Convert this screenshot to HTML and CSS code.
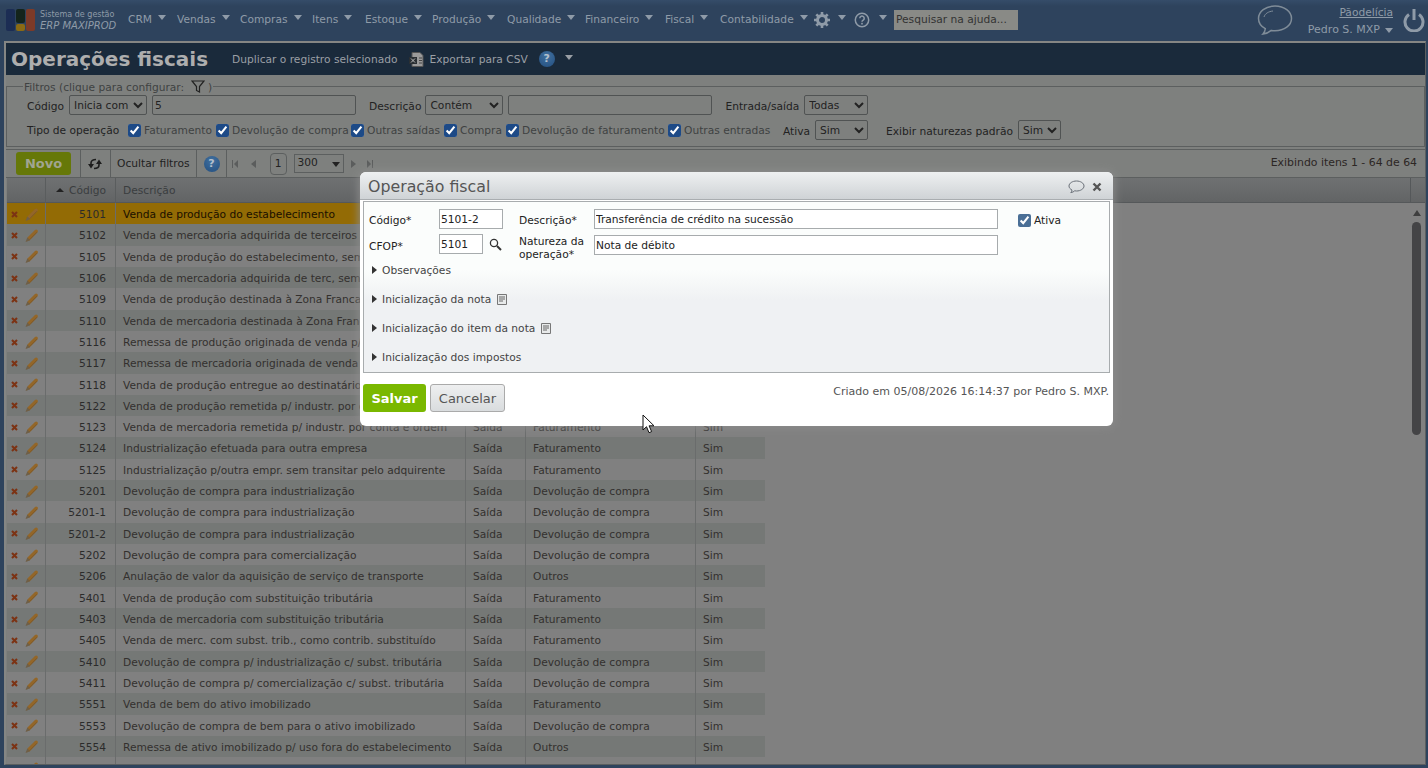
FILE: index.html
```html
<!DOCTYPE html>
<html lang="pt-BR">
<head>
    <meta charset="UTF-8">
    <title>Operações fiscais</title>
    <link rel="stylesheet" href="styles.css">
</head>
<body>
    <svg class="sprite" width="0" height="0">
        <symbol id="ic-pencil" viewBox="0 0 16 16">
            <path d="M5 11.500 13 3.500" stroke="#936628" stroke-width="3.600" stroke-linecap="round" fill="none"/>
            <path d="M6 12.500 13.800 4.500" stroke="#75542a" stroke-width=".8" fill="none"/>
            <path d="M3.600 10l2.900 3L1.500 15z" fill="#6f5f47"/>
        </symbol>
        <symbol id="ic-del" viewBox="0 0 7 7">
            <path d="M1 1l5 5M6 1 1 6" stroke="#7c3314" stroke-width="2.100" fill="none"/>
        </symbol>
        <symbol id="ic-note" viewBox="0 0 10 11">
            <path d="M.5.5h9v10h-9z" fill="#e8eaea" stroke="#777"/>
            <path d="M2 3h6M2 5h6M2 7h4" stroke="#666"/>
        </symbol>
    </svg>

    <header class="topbar">
        <div class="brand">
            <svg class="logo" width="30" height="24" viewBox="0 0 30 24">
                <rect x="0" y="1" width="9" height="22" rx="2" fill="#1c2d54"/>
                <rect x="10" y="1" width="9" height="14" rx="2" fill="#14241c"/>
                <rect x="10" y="16" width="9" height="7" rx="2" fill="#8a6a14"/>
                <rect x="20" y="1" width="9" height="22" rx="2" fill="#7c3a28"/>
            </svg>
            <div class="brand-text">
                <span>Sistema de gestão</span>
                <em>ERP MAXIPROD</em>
            </div>
        </div>
        <nav class="menu">
            <a style="width:49px">CRM<i class="caret"></i></a>
            <a style="width:63px">Vendas<i class="caret"></i></a>
            <a style="width:72px">Compras<i class="caret"></i></a>
            <a style="width:53px">Itens<i class="caret"></i></a>
            <a style="width:67px">Estoque<i class="caret"></i></a>
            <a style="width:75px">Produção<i class="caret"></i></a>
            <a style="width:78px">Qualidade<i class="caret"></i></a>
            <a style="width:80px">Financeiro<i class="caret"></i></a>
            <a style="width:55px">Fiscal<i class="caret"></i></a>
            <a style="width:93px">Contabilidade<i class="caret"></i></a>
        </nav>
        <svg class="gear" width="18" height="18" viewBox="0 0 18 18">
            <circle cx="9" cy="9" r="4.500" fill="none" stroke="#8f9ba8" stroke-width="3"/>
            <path d="M9 1v3M9 14v3M1 9h3M14 9h3M3.300 3.300l2.200 2.200M12.500 12.500l2.200 2.200M14.700 3.300l-2.200 2.200M5.500 12.500l-2.200 2.200" stroke="#8f9ba8" stroke-width="2.600"/>
        </svg>
        <i class="caret caret-gear"></i>
        <svg class="help-top" width="16" height="16" viewBox="0 0 16 16">
            <circle cx="8" cy="8" r="6.700" fill="none" stroke="#8f9ba8" stroke-width="1.500"/>
            <path d="M5.800 6.200a2.200 2.200 0 1 1 3.400 1.900c-.8.500-1.200.9-1.200 1.700" fill="none" stroke="#8f9ba8" stroke-width="1.500"/>
            <rect x="7.200" y="10.800" width="1.600" height="1.700" fill="#8f9ba8"/>
        </svg>
        <i class="caret caret-help"></i>
        <input class="search-help" type="text" value="Pesquisar na ajuda...">
        <svg class="bubble" width="36" height="32" viewBox="0 0 36 32">
            <path d="M18 2C8.600 2 1.500 7.600 1.500 14.500c0 4.300 2.700 8 6.800 10.200-.2 2.100-1 3.900-2.300 5.300 3.400-.4 6.200-1.800 8.300-3.600 1.200.2 2.400.3 3.700.3 9.400 0 16.500-5.400 16.500-12.200S27.400 2 18 2z" fill="none" stroke="#7f8c98" stroke-width="1.500"/>
            <path d="M7 13c1-3.500 4.500-5.500 9-6" fill="none" stroke="#7f8c98" stroke-width="1"/>
        </svg>
        <div class="user">
            <a class="company">Pãodelícia</a>
            <span class="user-name">Pedro S. MXP<i class="caret caret-user"></i></span>
        </div>
        <svg class="power" width="22" height="24" viewBox="0 0 22 24">
            <path d="M6 6.500a9 9 0 1 0 10 0" fill="none" stroke="#8f9ba8" stroke-width="3"/>
            <path d="M11 1v11" stroke="#8f9ba8" stroke-width="3"/>
        </svg>
    </header>

    <main class="panel">
        <div class="title-band">
            <h1>Operações fiscais</h1>
            <a class="act-dup">Duplicar o registro selecionado</a>
            <svg class="xls" width="15" height="15" viewBox="0 0 15 15">
                <path d="M3 .5h8l3 3v11H3z" fill="#9a9a9a" stroke="#555"/>
                <rect x="0" y="5" width="8" height="7" fill="#2a2f33"/>
                <path d="M2 6.500l4 4M6 6.500l-4 4" stroke="#bbb"/>
                <path d="M10 6h3M10 8.500h3M10 11h3" stroke="#444"/>
            </svg>
            <a class="act-csv">Exportar para CSV</a>
            <span class="help-dot help-title">?</span>
            <i class="caret caret-title"></i>
        </div>

        <fieldset class="filters">
            <legend>Filtros (clique para configurar:
                <svg class="funnel" width="14" height="13" viewBox="0 0 14 13"><path d="M1 1h12L8.500 6.500V12l-3-1.500v-4z" fill="none" stroke="#222" stroke-width="1.200"/></svg>
            )</legend>
            <div class="filter-row row-one">
                <label class="lbl-code">Código</label>
                <select class="sel-code"><option>Inicia com</option></select>
                <input class="inp-code" type="text" value="5">
                <label class="lbl-desc">Descrição</label>
                <select class="sel-desc"><option>Contém</option></select>
                <input class="inp-desc" type="text">
                <label class="lbl-es">Entrada/saída</label>
                <select class="sel-es"><option>Todas</option></select>
            </div>
            <div class="filter-row row-two">
                <label class="lbl-tipo">Tipo de operação</label>
                <label class="chk c-fat"><input type="checkbox" checked>Faturamento</label>
                <label class="chk c-dev"><input type="checkbox" checked>Devolução de compra</label>
                <label class="chk c-out"><input type="checkbox" checked>Outras saídas</label>
                <label class="chk c-com"><input type="checkbox" checked>Compra</label>
                <label class="chk c-dfa"><input type="checkbox" checked>Devolução de faturamento</label>
                <label class="chk c-oen"><input type="checkbox" checked>Outras entradas</label>
                <label class="lbl-ativa">Ativa</label>
                <select class="sel-ativa"><option>Sim</option></select>
                <label class="lbl-exibir">Exibir naturezas padrão</label>
                <select class="sel-exibir"><option>Sim</option></select>
            </div>
        </fieldset>

        <div class="toolbar">
            <button class="btn-novo">Novo</button>
            <span class="tool-sep"></span>
            <svg class="refresh" width="14" height="12" viewBox="0 0 14 12">
                <path d="M3 6.500V5C3 3 5 1.500 8 1.500M11 5.500V7c0 2-2 3.500-5 3.500" fill="none" stroke="#1d1d1d" stroke-width="1.600"/>
                <path d="M0 6h6l-3 4.500zM8 6h6l-3-4.500z" fill="#1d1d1d"/>
            </svg>
            <span class="tool-sep"></span>
            <span class="tool-text">Ocultar filtros</span>
            <span class="tool-sep"></span>
            <span class="help-dot help-tool">?</span>
            <span class="tool-sep"></span>
            <span class="pager">
                <svg width="6" height="8" viewBox="0 0 6 8"><path d="M0 0h1v8H0zM6 0v8L2 4z" fill="#5b5d5d"/></svg>
                <svg class="pg-prev" width="5" height="8" viewBox="0 0 5 8"><path d="M5 0v8L0 4z" fill="#5b5d5d"/></svg>
                <span class="page-box">1</span>
                <span class="page-size">300<i class="caret-dark"></i></span>
                <svg width="5" height="8" viewBox="0 0 5 8"><path d="M0 0v8l5-4z" fill="#5b5d5d"/></svg>
                <svg class="pg-last" width="6" height="8" viewBox="0 0 6 8"><path d="M0 0v8l4-4zM5 0h1v8H5z" fill="#5b5d5d"/></svg>
            </span>
            <span class="tool-count">Exibindo itens 1 - 64 de 64</span>
        </div>

        <div class="grid-head">
            <div class="cols">
                <span></span>
                <span class="h-code"><i class="sort-up"></i>Código</span>
                <span>Descrição</span>
                <span></span><span></span><span></span>
            </div>
            <div class="head-scroll"></div>
        </div>

        <div class="grid-wrap">
            <div class="grid-rows">
                <div class="cols row selected"><span class="acts"><svg class="del"><use href="#ic-del"/></svg><svg class="pen"><use href="#ic-pencil"/></svg></span><span class="num">5101</span><span>Venda de produção do estabelecimento</span><span></span><span></span><span></span></div>
                <div class="cols row"><span class="acts"><svg class="del"><use href="#ic-del"/></svg><svg class="pen"><use href="#ic-pencil"/></svg></span><span class="num">5102</span><span>Venda de mercadoria adquirida de terceiros</span><span></span><span></span><span></span></div>
                <div class="cols row"><span class="acts"><svg class="del"><use href="#ic-del"/></svg><svg class="pen"><use href="#ic-pencil"/></svg></span><span class="num">5105</span><span>Venda de produção do estabelecimento, sem transitar</span><span></span><span></span><span></span></div>
                <div class="cols row"><span class="acts"><svg class="del"><use href="#ic-del"/></svg><svg class="pen"><use href="#ic-pencil"/></svg></span><span class="num">5106</span><span>Venda de mercadoria adquirida de terc, sem transitar</span><span></span><span></span><span></span></div>
                <div class="cols row"><span class="acts"><svg class="del"><use href="#ic-del"/></svg><svg class="pen"><use href="#ic-pencil"/></svg></span><span class="num">5109</span><span>Venda de produção destinada à Zona Franca de Manaus</span><span></span><span></span><span></span></div>
                <div class="cols row"><span class="acts"><svg class="del"><use href="#ic-del"/></svg><svg class="pen"><use href="#ic-pencil"/></svg></span><span class="num">5110</span><span>Venda de mercadoria destinada à Zona Franca de Manaus</span><span></span><span></span><span></span></div>
                <div class="cols row"><span class="acts"><svg class="del"><use href="#ic-del"/></svg><svg class="pen"><use href="#ic-pencil"/></svg></span><span class="num">5116</span><span>Remessa de produção originada de venda p/ entrega</span><span></span><span></span><span></span></div>
                <div class="cols row"><span class="acts"><svg class="del"><use href="#ic-del"/></svg><svg class="pen"><use href="#ic-pencil"/></svg></span><span class="num">5117</span><span>Remessa de mercadoria originada de venda p/ entrega</span><span></span><span></span><span></span></div>
                <div class="cols row"><span class="acts"><svg class="del"><use href="#ic-del"/></svg><svg class="pen"><use href="#ic-pencil"/></svg></span><span class="num">5118</span><span>Venda de produção entregue ao destinatário por conta</span><span></span><span></span><span></span></div>
                <div class="cols row"><span class="acts"><svg class="del"><use href="#ic-del"/></svg><svg class="pen"><use href="#ic-pencil"/></svg></span><span class="num">5122</span><span>Venda de produção remetida p/ industr. por conta e ordem</span><span></span><span></span><span></span></div>
                <div class="cols row"><span class="acts"><svg class="del"><use href="#ic-del"/></svg><svg class="pen"><use href="#ic-pencil"/></svg></span><span class="num">5123</span><span>Venda de mercadoria remetida p/ industr. por conta e ordem</span><span>Saída</span><span>Faturamento</span><span>Sim</span></div>
                <div class="cols row"><span class="acts"><svg class="del"><use href="#ic-del"/></svg><svg class="pen"><use href="#ic-pencil"/></svg></span><span class="num">5124</span><span>Industrialização efetuada para outra empresa</span><span>Saída</span><span>Faturamento</span><span>Sim</span></div>
                <div class="cols row"><span class="acts"><svg class="del"><use href="#ic-del"/></svg><svg class="pen"><use href="#ic-pencil"/></svg></span><span class="num">5125</span><span>Industrialização p/outra empr. sem transitar pelo adquirente</span><span>Saída</span><span>Faturamento</span><span>Sim</span></div>
                <div class="cols row"><span class="acts"><svg class="del"><use href="#ic-del"/></svg><svg class="pen"><use href="#ic-pencil"/></svg></span><span class="num">5201</span><span>Devolução de compra para industrialização</span><span>Saída</span><span>Devolução de compra</span><span>Sim</span></div>
                <div class="cols row"><span class="acts"><svg class="del"><use href="#ic-del"/></svg><svg class="pen"><use href="#ic-pencil"/></svg></span><span class="num">5201-1</span><span>Devolução de compra para industrialização</span><span>Saída</span><span>Devolução de compra</span><span>Sim</span></div>
                <div class="cols row"><span class="acts"><svg class="del"><use href="#ic-del"/></svg><svg class="pen"><use href="#ic-pencil"/></svg></span><span class="num">5201-2</span><span>Devolução de compra para industrialização</span><span>Saída</span><span>Devolução de compra</span><span>Sim</span></div>
                <div class="cols row"><span class="acts"><svg class="del"><use href="#ic-del"/></svg><svg class="pen"><use href="#ic-pencil"/></svg></span><span class="num">5202</span><span>Devolução de compra para comercialização</span><span>Saída</span><span>Devolução de compra</span><span>Sim</span></div>
                <div class="cols row"><span class="acts"><svg class="del"><use href="#ic-del"/></svg><svg class="pen"><use href="#ic-pencil"/></svg></span><span class="num">5206</span><span>Anulação de valor da aquisição de serviço de transporte</span><span>Saída</span><span>Outros</span><span>Sim</span></div>
                <div class="cols row"><span class="acts"><svg class="del"><use href="#ic-del"/></svg><svg class="pen"><use href="#ic-pencil"/></svg></span><span class="num">5401</span><span>Venda de produção com substituição tributária</span><span>Saída</span><span>Faturamento</span><span>Sim</span></div>
                <div class="cols row"><span class="acts"><svg class="del"><use href="#ic-del"/></svg><svg class="pen"><use href="#ic-pencil"/></svg></span><span class="num">5403</span><span>Venda de mercadoria com substituição tributária</span><span>Saída</span><span>Faturamento</span><span>Sim</span></div>
                <div class="cols row"><span class="acts"><svg class="del"><use href="#ic-del"/></svg><svg class="pen"><use href="#ic-pencil"/></svg></span><span class="num">5405</span><span>Venda de merc. com subst. trib., como contrib. substituído</span><span>Saída</span><span>Faturamento</span><span>Sim</span></div>
                <div class="cols row"><span class="acts"><svg class="del"><use href="#ic-del"/></svg><svg class="pen"><use href="#ic-pencil"/></svg></span><span class="num">5410</span><span>Devolução de compra p/ industrialização c/ subst. tributária</span><span>Saída</span><span>Devolução de compra</span><span>Sim</span></div>
                <div class="cols row"><span class="acts"><svg class="del"><use href="#ic-del"/></svg><svg class="pen"><use href="#ic-pencil"/></svg></span><span class="num">5411</span><span>Devolução de compra p/ comercialização c/ subst. tributária</span><span>Saída</span><span>Devolução de compra</span><span>Sim</span></div>
                <div class="cols row"><span class="acts"><svg class="del"><use href="#ic-del"/></svg><svg class="pen"><use href="#ic-pencil"/></svg></span><span class="num">5551</span><span>Venda de bem do ativo imobilizado</span><span>Saída</span><span>Faturamento</span><span>Sim</span></div>
                <div class="cols row"><span class="acts"><svg class="del"><use href="#ic-del"/></svg><svg class="pen"><use href="#ic-pencil"/></svg></span><span class="num">5553</span><span>Devolução de compra de bem para o ativo imobilizado</span><span>Saída</span><span>Devolução de compra</span><span>Sim</span></div>
                <div class="cols row"><span class="acts"><svg class="del"><use href="#ic-del"/></svg><svg class="pen"><use href="#ic-pencil"/></svg></span><span class="num">5554</span><span>Remessa de ativo imobilizado p/ uso fora do estabelecimento</span><span>Saída</span><span>Outros</span><span>Sim</span></div>
                <div class="cols row"><span class="acts"><svg class="del"><use href="#ic-del"/></svg><svg class="pen"><use href="#ic-pencil"/></svg></span><span></span><span></span><span></span><span></span><span></span></div>
            </div>
            <div class="scroll">
                <i class="scroll-up"></i>
                <i class="scroll-thumb"></i>
            </div>
        </div>
    </main>

    <section class="modal">
        <div class="modal-head">
            <h2>Operação fiscal</h2>
            <svg class="modal-bubble" width="17" height="14" viewBox="0 0 17 14">
                <path d="M8.500 1C4.400 1 1 3.200 1 6c0 1.700 1.200 3.100 3 4-.1 1-.5 1.900-1.200 2.600C4.500 12.400 5.800 11.700 6.700 10.800c.6.100 1.200.2 1.800.2 4.100 0 7.500-2.200 7.500-5S12.600 1 8.500 1z" fill="none" stroke="#6a7078"/>
            </svg>
            <svg class="modal-close" width="10" height="10" viewBox="0 0 10 10">
                <path d="M1.500 1.500l7 7M8.500 1.500l-7 7" stroke="#555" stroke-width="2.400"/>
            </svg>
        </div>
        <div class="modal-body">
            <div class="form-grid">
                <label class="f-l1">Código*</label>
                <input class="f-code" type="text" value="5101-2">
                <label class="f-l2">Descrição*</label>
                <input class="f-wide" type="text" value="Transferência de crédito na sucessão">
                <label class="f-ativa"><input type="checkbox" checked>Ativa</label>

                <label class="f-l1">CFOP*</label>
                <div class="cfop">
                    <input class="f-cfop" type="text" value="5101">
                    <svg width="13" height="13" viewBox="0 0 13 13">
                        <circle cx="5" cy="5" r="3.600" fill="none" stroke="#333" stroke-width="1.300"/>
                        <path d="M8 8l4 4" stroke="#333" stroke-width="2"/>
                    </svg>
                </div>
                <label class="two-lines">Natureza da operação*</label>
                <input class="f-wide" type="text" value="Nota de débito">
            </div>
            <div class="section first"><i class="tri"></i>Observações</div>
            <div class="section"><i class="tri"></i>Inicialização da nota<svg class="note"><use href="#ic-note"/></svg></div>
            <div class="section"><i class="tri"></i>Inicialização do item da nota<svg class="note"><use href="#ic-note"/></svg></div>
            <div class="section"><i class="tri"></i>Inicialização dos impostos</div>
        </div>
        <div class="modal-foot">
            <button class="btn-save">Salvar</button>
            <button class="btn-cancel">Cancelar</button>
            <span class="created">Criado em 05/08/2026 16:14:37 por Pedro S. MXP.</span>
        </div>
    </section>

    <svg class="cursor" width="14" height="21" viewBox="0 0 14 21">
        <path d="M1 1v15l3.500-3.300 2.500 6 2.600-1.100-2.500-5.800H12z" fill="#fff" stroke="#111" stroke-width="1"/>
    </svg>
</body>
</html>
```

FILE: styles.css
```css
* {
    box-sizing: border-box;
}
html, body {
    margin: 0;
    height: 768px;
    overflow: hidden;
}
body {
    background: #2e435d;
    font-family: "DejaVu Sans", sans-serif;
    font-size: 10.67px;
    color: #222;
    display: flex;
    flex-direction: column;
}
.sprite {
    position: absolute;
}
a {
    color: inherit;
}

/* top bar */
.topbar {
    height: 41px;
    flex: none;
    display: flex;
    align-items: center;
    padding-bottom: 2px;
    color: #8f9ba8;
    background: linear-gradient(#354c69, #2e435d 6px);
}
.brand {
    display: flex;
    align-items: center;
    width: 128px;
    padding-left: 6px;
}
.logo {
    flex: none;
}
.brand-text {
    display: flex;
    flex-direction: column;
    font-size: 8px;
    line-height: 11px;
    margin-left: 4px;
}
.brand-text em {
    font-size: 10px;
    font-style: italic;
    white-space: nowrap;
}
.menu {
    display: flex;
}
.menu a {
    display: flex;
    align-items: center;
    gap: 6px;
    white-space: nowrap;
}
.caret {
    display: inline-block;
    width: 0;
    height: 0;
    border: 4px solid transparent;
    border-top: 5px solid #8f9ba8;
    border-bottom: 0;
    margin-top: -4px;
}
.caret-gear {
    margin-left: 7px;
}
.help-top {
    margin-left: 8px;
}
.caret-help {
    margin-left: 9px;
}
.search-help {
    width: 124px;
    height: 20px;
    margin-left: 7px;
    padding: 0 2px;
    border: 0;
    background: #898a86;
    font: 10.67px "DejaVu Sans", sans-serif;
    color: #333;
}
.bubble {
    margin-left: 239px;
}
.user {
    width: 100px;
    margin: 2px 0 0;
    text-align: right;
    line-height: 17px;
}
.company {
    text-decoration: underline;
}
.user-name {
    display: block;
    font-size: 11px;
}
.caret-user {
    margin-left: 5px;
    margin-top: 0;
}
.power {
    margin-left: 10px;
}

/* main panel */
.panel {
    flex: 1;
    margin: 0 2px 3px 4px;
    border-top: 2px solid #858684;
    border-left: 2px solid #858684;
    border-right: 1px solid #5c5f5f;
    border-bottom: 1px solid #5c5f5f;
    background: #7e807e;
    display: flex;
    flex-direction: column;
    min-height: 0;
}
.title-band {
    height: 32px;
    flex: none;
    display: flex;
    align-items: center;
    background: #1a2a3b;
    color: #9a9fa5;
    padding-left: 5px;
}
.title-band h1 {
    margin: 0;
    width: 221px;
    font-size: 20px;
    font-weight: bold;
    color: #aeaeae;
    white-space: nowrap;
}
.xls {
    margin-left: 12px;
}
.act-csv {
    margin-left: 5px;
}
.help-dot {
    display: inline-block;
    width: 16px;
    height: 16px;
    border-radius: 50%;
    background: radial-gradient(circle at 50% 30%, #41709f, #234f80);
    color: #b5c0cc;
    font-weight: bold;
    font-size: 11px;
    line-height: 16px;
    text-align: center;
}
.help-title {
    margin-left: 11px;
}
.caret-title {
    margin-left: 10px;
    border-top-color: #9a9fa5;
}

/* filters */
.filters {
    margin: 5px 0 0;
    padding: 0;
    height: 67px;
    border: 1px solid #5c5f5f;
    min-width: 0;
}
.filters legend {
    margin-left: 16px;
    padding: 0 1px;
    color: #3f4242;
    line-height: 12px;
    height: 12px;
}
.funnel {
    vertical-align: -2px;
    margin-left: 3px;
}
.filter-row {
    display: flex;
    align-items: center;
    height: 20px;
    white-space: nowrap;
}
.filter-row > label:not(.chk):not(.lbl-tipo) {
    margin-top: 2px;
}
.row-one {
    margin-top: 3px;
}
.row-two {
    margin-top: 5px;
}
.filters select, .filters input[type=text] {
    height: 20px;
    border: 1px solid #505353;
    border-radius: 2px;
    background: transparent;
    font: 10.67px "DejaVu Sans", sans-serif;
    color: #222;
    padding: 0 2px;
}
.filters select {
    padding: 0;
}
.lbl-code, .lbl-tipo {
    margin-left: 20px;
}
.sel-code {
    width: 78px;
    margin-left: 5px;
}
.inp-code {
    width: 204px;
    margin-left: 5px;
}
.lbl-desc {
    margin-left: 13px;
}
.sel-desc {
    width: 78px;
    margin-left: 4px;
}
.inp-desc {
    width: 204px;
    margin-left: 5px;
}
.lbl-es {
    margin-left: 13px;
}
.sel-es {
    width: 64px;
    margin-left: 5px;
}
.lbl-tipo {
    width: 101px;
}
.chk {
    display: flex;
    align-items: center;
    color: #3f4242;
}
.chk input, .f-ativa input {
    width: 13px;
    height: 13px;
    margin: 0 3px 0 0;
    accent-color: #1d4a87;
}
.c-fat {
    width: 88px;
}
.c-dev {
    width: 135px;
}
.c-out {
    width: 93px;
}
.c-com {
    width: 62px;
}
.c-dfa {
    width: 162px;
}
.c-oen {
    width: 115px;
}
.sel-ativa {
    width: 53px;
    margin-left: 5px;
}
.lbl-exibir {
    margin-left: 18px;
}
.sel-exibir {
    width: 43px;
    margin-left: 5px;
}

/* toolbar */
.toolbar {
    height: 29px;
    flex: none;
    display: flex;
    align-items: center;
    margin-top: 2px;
    padding-left: 10px;
    border-top: 1px solid #5c5f5f;
    border-bottom: 1px solid #5c5f5f;
}
.btn-novo {
    width: 55px;
    height: 23px;
    margin-right: 1px;
    border: 0;
    border-radius: 3px;
    background: #667808;
    color: #a0a590;
    font: bold 13px "DejaVu Sans", sans-serif;
    padding: 0;
}
.tool-sep {
    width: 1px;
    height: 27px;
    background: #5c5f5f;
    margin: 0 6px 0 8px;
}
.refresh {
    margin-left: 1px;
}
.tool-text {
    color: #1f1f1f;
    margin-right: -2px;
}
.help-tool {
    margin: 0 -2px 0 1px;
}
.pager {
    display: flex;
    align-items: center;
    margin-left: -1px;
}
.pg-prev {
    margin: 0 14px 0 13px;
}
.page-box {
    width: 17px;
    height: 22px;
    border: 1px solid #5c5f5f;
    border-radius: 4px;
    text-align: center;
    line-height: 20px;
    margin-right: 7px;
}
.page-size {
    position: relative;
    width: 50px;
    height: 19px;
    border: 1px solid #5c5f5f;
    padding-left: 3px;
    line-height: 15px;
    margin-right: 7px;
}
.caret-dark {
    position: absolute;
    right: 3px;
    top: 7px;
    border: 4px solid transparent;
    border-top: 5px solid #222;
    border-bottom: 0;
}
.pager .pg-last {
    margin-left: 11px;
}
.tool-count {
    margin: 0 8px 2px auto;
    font-size: 10.9px;
    color: #2c2624;
}

/* grid */
.cols {
    display: grid;
    grid-template-columns: 38px 70px 350px 60px 170px 70px;
    width: 758px;
}
.grid-head {
    height: 25px;
    flex: none;
    display: flex;
    justify-content: space-between;
    margin-left: 1px;
    background: linear-gradient(#6f7172, #626465);
    border-bottom: 1px solid #55585a;
    color: #3a3d3f;
}
.grid-head span {
    line-height: 25px;
    padding-left: 7px;
    border-left: 1px solid #5a5d5e;
}
.grid-head span:first-child {
    border-left: 0;
}
.grid-head .h-code {
    padding-left: 10px;
}
.head-scroll {
    width: 15px;
    border-left: 1px solid #55585a;
}
.sort-up {
    display: inline-block;
    border: 4px solid transparent;
    border-bottom: 4px solid #222;
    border-top: 0;
    margin-right: 5px;
    vertical-align: 2px;
}
.grid-wrap {
    flex: 1;
    min-height: 0;
    margin-left: 1px;
    overflow: hidden;
    background: #808080;
    display: flex;
    justify-content: space-between;
}
.grid-rows {
    width: 758px;
}
.row {
    height: 21.32px;
    color: #33302e;
}
.row > span {
    line-height: 24px;
    padding-left: 7px;
    white-space: nowrap;
    overflow: hidden;
    border-left: 1px solid #6a6c6c;
}
.row:nth-child(even) {
    background: #757876;
}
.row.selected {
    background: #936b05;
    color: #1a1000;
}
.row > .acts {
    border-left: 0;
    padding: 1px 0 0 4px;
    display: flex;
    align-items: center;
    gap: 6px;
}
.row > .num {
    text-align: right;
    padding: 0 9px 0 0;
    color: #2b2b2b;
}
.del {
    width: 7px;
    height: 7px;
    flex: none;
}
.pen {
    width: 15px;
    height: 15px;
    flex: none;
}
.scroll {
    position: relative;
    width: 15px;
    flex: none;
}
.scroll-up {
    position: absolute;
    left: 3px;
    top: 7px;
    border: 4px solid transparent;
    border-bottom: 6px solid #3e3e3e;
    border-top: 0;
}
.scroll-thumb {
    position: absolute;
    left: 2px;
    top: 19px;
    width: 9px;
    height: 213px;
    border-radius: 5px;
    background: #444446;
}

/* modal */
.modal {
    position: absolute;
    left: 360px;
    top: 172px;
    width: 753px;
    height: 254px;
    border-radius: 6px;
    background: #fff;
    box-shadow: 0 0 10px 1px #8c8c8c;
    overflow: hidden;
}
.modal-head {
    height: 28px;
    display: flex;
    align-items: center;
    padding: 2px 11px 0 8px;
    background: linear-gradient(#eef0f1, #cfd3d6);
    border-bottom: 1px solid #a9adb0;
}
.modal-head h2 {
    margin: 0;
    font-size: 15.8px;
    font-weight: normal;
    color: #555;
    flex: 1;
}
.modal-close {
    margin-left: 7px;
}
.modal-body {
    height: 172px;
    margin: 1px 3px 0;
    border: 1px solid #a8acae;
    background: linear-gradient(#fbfdfc 40%, #eff1f3 58%);
}
.form-grid {
    display: grid;
    grid-template-columns: 70px 80px 75px 404px auto;
    align-items: center;
    padding: 7px 0 0 5px;
}
.form-grid label {
    color: #222;
    line-height: 13px;
}
.form-grid .f-l1, .form-grid .f-l2, .form-grid .f-ativa {
    margin-top: 2px;
}
.form-grid input[type=text] {
    height: 20px;
    border: 1px solid #a7abad;
    padding: 0 1px;
    font: 10.67px "DejaVu Sans", sans-serif;
    color: #222;
    background: #fff;
}
.form-grid .f-code {
    width: 64px;
}
.form-grid .f-cfop {
    width: 44px;
}
.form-grid .f-wide {
    width: 404px;
    background: #e7effc;
}
.cfop {
    display: flex;
    align-items: center;
    gap: 6px;
    margin-bottom: 2px;
}
.f-ativa {
    display: flex;
    align-items: center;
    margin-left: 20px;
}
.f-ativa input {
    accent-color: #4a6f96;
}
.form-grid .two-lines {
    width: 70px;
    margin-top: 6px;
}
.section {
    display: flex;
    align-items: center;
    height: 16px;
    margin: 13px 0 0 8px;
    color: #444;
}
.section.first {
    margin-top: 1px;
}
.tri {
    border: 4px solid transparent;
    border-left: 5px solid #333;
    border-right: 0;
    margin-right: 5px;
}
.note {
    width: 10px;
    height: 11px;
    margin-left: 6px;
}
.modal-foot {
    display: flex;
    align-items: flex-start;
    padding: 11px 4px 0 3px;
}
.btn-save {
    width: 63px;
    height: 28px;
    border: 0;
    border-radius: 3px;
    background: #7ab800;
    color: #fff;
    font: bold 13px "DejaVu Sans", sans-serif;
}
.btn-cancel {
    width: 75px;
    height: 28px;
    margin-left: 4px;
    border: 1px solid #aaa;
    border-radius: 3px;
    background: linear-gradient(#eeeff0, #d9dcde);
    color: #555;
    font: 13px "DejaVu Sans", sans-serif;
}
.created {
    margin-left: auto;
    font-size: 11px;
    color: #555;
    padding-top: 1px;
}
.cursor {
    position: absolute;
    left: 642px;
    top: 414px;
}
```
